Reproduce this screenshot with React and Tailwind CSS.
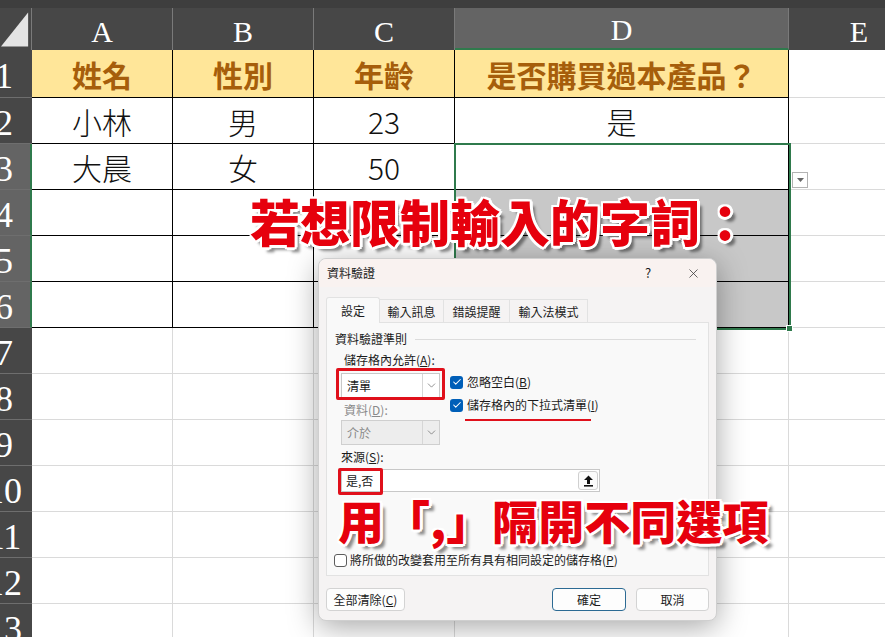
import { ChevronDown, X, Check } from 'lucide-react';

const COLS = [
  { key: 'A', w: 'w-[141px]' },
  { key: 'B', w: 'w-[141px]' },
  { key: 'C', w: 'w-[141px]' },
  { key: 'D', w: 'w-[334px]' },
  { key: 'E', w: 'w-[141px]' },
];

const DATA = {
  1: ['姓名', '性別', '年齡', '是否購買過本產品？', ''],
  2: ['小林', '男', '23', '是', ''],
  3: ['大晨', '女', '50', '', ''],
};

const ROWS = Array.from({ length: 13 }, (_, i) => i + 1);

const CJK = "font-['Noto_Sans_CJK_TC','Noto_Sans',sans-serif]";
const SERIF = "font-['Liberation_Serif',serif]";

const outline =
  '[text-shadow:2px_0_#fff,-2px_0_#fff,0_2px_#fff,0_-2px_#fff,2px_2px_#fff,-2px_-2px_#fff,2px_-2px_#fff,-2px_2px_#fff,3px_0_#fff,0_3px_#fff,5px_5px_3px_rgba(0,0,0,0.45)]';

function Corner() {
  return (
    <div className="w-[32px] h-full shrink-0 border-r border-[#7a7a7a] flex items-end">
      <svg width="32" height="42" viewBox="0 0 32 42">
        <polygon points="1,39 29,39 29,4" fill="#e4e4e4" />
      </svg>
    </div>
  );
}

function RowHeader({ r }) {
  const sel = r >= 3 && r <= 6;
  return (
    <div
      className={`w-[32px] shrink-0 h-full overflow-hidden flex items-center pt-[5px] border-b border-[#6e6e6e] ${
        sel ? 'bg-[#646464] border-r-2 border-r-[#2f7a4c]' : 'bg-[#474747]'
      }`}
    >
      <div className={`w-[8px] flex justify-center whitespace-nowrap text-white text-[36px] leading-none ${SERIF}`}>
        {r}
      </div>
    </div>
  );
}

function Cell({ r, ci, col }) {
  const inTable = r <= 6 && ci < 4;
  const text = DATA[r]?.[ci] ?? '';
  let bg = 'bg-white';
  if (r === 1 && ci < 4) bg = 'bg-[#ffe699]';
  if (ci === 3 && r >= 4 && r <= 6) bg = 'bg-[#c8c8c8]';
  const textCls = r === 1 ? 'font-bold text-[#a65e0b]' : 'font-light text-[#111]';
  return (
    <div
      className={`${col.w} shrink-0 h-full border-r border-b flex items-center justify-center ${
        inTable ? 'border-black' : 'border-[#dadada]'
      } ${bg}`}
    >
      {text && <span className={`text-[30px] leading-none ${textCls}`}>{text}</span>}
    </div>
  );
}

function Checkbox({ checked }) {
  return checked ? (
    <span className="w-[13px] h-[13px] rounded-[3px] bg-[#005fb8] flex items-center justify-center shrink-0">
      <Check size={10} strokeWidth={2.5} color="white" />
    </span>
  ) : (
    <span className="w-[13px] h-[13px] rounded-[3px] border border-[#5c5c5c] bg-white shrink-0" />
  );
}

function Select({ value, disabled }) {
  return (
    <div
      className={`w-[99px] h-[25px] flex border ${
        disabled ? 'bg-[#ededed] border-[#cfcfcf] text-[#8a8a8a]' : 'bg-white border-[#c8c8c8] text-[#1b1b1b]'
      }`}
    >
      <div className="flex-1 flex items-center pl-[5px]">{value}</div>
      <div className="w-[17px] border-l border-[#d6d6d6] flex items-center justify-center">
        <ChevronDown size={13} strokeWidth={1.3} color="#666" />
      </div>
    </div>
  );
}

function Dialog() {
  return (
    <div className="absolute left-[318px] top-[258px] w-[399px] h-[363px] rounded-[8px] bg-[#f5f3f3] border border-[#cfcfcf] shadow-[0_6px_30px_rgba(0,0,0,0.35)] text-[12px] text-[#1b1b1b] flex flex-col">
      <div className="h-[28px] shrink-0 flex items-center pl-[8px] pr-[13px] rounded-t-[8px] bg-[#f9f2f0]">
        <span>資料驗證</span>
        <span className="ml-auto w-[20px] text-center text-[13px]">?</span>
        <span className="ml-[25px] w-[20px] flex justify-center">
          <X size={15} strokeWidth={1.2} color="#333" />
        </span>
      </div>

      <div className="mt-[10px] px-[7px] h-[26px] flex items-end shrink-0 relative z-10">
        <div className="w-[54px] h-[26px] bg-[#f9f9f9] border border-b-0 border-[#e2e2e2] rounded-t-[3px] flex items-center justify-center">
          設定
        </div>
        <div className="w-[64px] h-[24px] border-t border-r border-[#e2e2e2] flex items-center justify-center">輸入訊息</div>
        <div className="w-[66px] h-[24px] border-t border-r border-[#e2e2e2] flex items-center justify-center">錯誤提醒</div>
        <div className="w-[78px] h-[24px] border-t border-r border-[#e2e2e2] flex items-center justify-center">輸入法模式</div>
      </div>

      <div className="mx-[7px] -mt-px h-[254px] shrink-0 bg-[#f9f9f9] border border-[#e2e2e2] pt-[8px] px-[8px] flex flex-col">
        <div className="h-[16px] flex items-center">
          <span>資料驗證準則</span>
          <span className="flex-1 h-px bg-[#dcdcdc] ml-[8px] mr-[4px]" />
        </div>
        <div className="h-[16px] mt-[5px] pl-[9px] flex items-center">
          儲存格內允許(<span className="underline">A</span>):
        </div>

        <div className="mt-[5px] flex">
          <div className="ml-[6px] w-[99px] flex flex-col">
            <div className="relative">
              <Select value="清單" />
              <div className="absolute -left-[5px] -top-[5px] w-[109px] h-[32px] border-[3px] border-[#e0101b] rounded-[2px]" />
            </div>
            <div className="h-[16px] mt-[4px] pl-[3px] flex items-center text-[#8a8a8a]">
              資料(<span className="underline">D</span>):
            </div>
            <div className="mt-[2px]">
              <Select value="介於" disabled />
            </div>
          </div>
          <div className="ml-[10px] flex flex-col">
            <div className="mt-[1px] h-[16px] flex items-center gap-[4px]">
              <Checkbox checked />
              <span>
                忽略空白(<span className="underline">B</span>)
              </span>
            </div>
            <div className="mt-[7px] h-[16px] flex items-center gap-[4px] relative">
              <Checkbox checked />
              <span>
                儲存格內的下拉式清單(<span className="underline">I</span>)
              </span>
              <div className="absolute left-[15px] top-[22px] w-[126px] h-[2px] bg-[#e0101b]" />
            </div>
          </div>
        </div>

        <div className="h-[16px] mt-[4px] ml-[6px] flex items-center">
          來源(<span className="underline">S</span>):
        </div>
        <div className="relative mt-[4px] ml-[6px] w-[259px] h-[23px] bg-white border border-[#c8c8c8] flex items-center">
          <span className="pl-[4px]">是,否</span>
          <div className="ml-auto mr-px w-[20px] h-[19px] border border-[#d0d0d0] rounded-[3px] bg-[#fbfbfb] flex items-center justify-center">
            <svg width="11" height="12" viewBox="0 0 11 12">
              <path d="M5.5 0.5 L10 5 L7 5 L7 9 L4 9 L4 5 L1 5 Z" fill="#111" />
              <rect x="1" y="10" width="9" height="1.6" fill="#111" />
            </svg>
          </div>
          <div className="absolute -left-[4px] -top-[2px] w-[45px] h-[27px] border-[3px] border-[#e0101b] rounded-[2px]" />
        </div>

        <div className="mt-[60px] -ml-px h-[16px] flex items-center gap-[3px]">
          <Checkbox />
          <span>
            將所做的改變套用至所有具有相同設定的儲存格(<span className="underline">P</span>)
          </span>
        </div>
      </div>

      <div className="mt-[12px] px-[7px] h-[23px] flex shrink-0">
        <div className="w-[79px] h-[23px] bg-[#fdfdfd] border border-[#d3d3d3] rounded-[4px] flex items-center justify-center">
          全部清除(<span className="underline">C</span>)
        </div>
        <div className="ml-auto w-[74px] h-[23px] bg-[#fdfdfd] border border-[#2c6a93] rounded-[4px] flex items-center justify-center">
          確定
        </div>
        <div className="ml-[10px] w-[73px] h-[23px] bg-[#fdfdfd] border border-[#d3d3d3] rounded-[4px] flex items-center justify-center">
          取消
        </div>
      </div>
    </div>
  );
}

export default function App() {
  return (
    <div className={`relative w-[885px] h-[637px] overflow-hidden bg-white ${CJK}`}>
      <div className="h-[8px] bg-[#3e3e3e]" />

      <div className="h-[42px] flex bg-[#474747]">
        <Corner />
        {COLS.map((c) => (
          <div
            key={c.key}
            className={`${c.w} shrink-0 h-full border-r border-[#7a7a7a] flex items-end justify-center pb-[3px] text-white text-[30px] leading-none ${SERIF} ${
              c.key === 'D' ? 'bg-[#646464] border-b-2 border-b-[#2f7a4c]' : ''
            }`}
          >
            {c.key}
          </div>
        ))}
      </div>

      {ROWS.map((r) => (
        <div key={r} className={`flex ${r === 1 ? 'h-[48px]' : 'h-[46px]'}`}>
          <RowHeader r={r} />
          {COLS.map((c, ci) => (
            <Cell key={c.key} r={r} ci={ci} col={c} />
          ))}
        </div>
      ))}

      {/* selection D3:D6 */}
      <div className="absolute left-[454px] top-[143px] w-[337px] h-[187px] border-2 border-[#2f7a4c]" />
      <div className="absolute left-[786px] top-[325px] w-[7px] h-[7px] bg-[#2f7a4c] border border-white" />

      {/* list dropdown button */}
      <div className="absolute left-[792px] top-[172px] w-[16px] h-[16px] bg-white border border-[#b3b3b3] flex items-center justify-center">
        <svg width="7" height="4" viewBox="0 0 7 4">
          <polygon points="0,0 7,0 3.5,4" fill="#666" />
        </svg>
      </div>

      <Dialog />

      <div className={`absolute left-[250px] top-[195px] whitespace-nowrap text-[50px] leading-none font-black text-[#e6000d] ${outline}`}>
        若想限制輸入的字詞：
      </div>
      <div className={`absolute left-[338px] top-[496px] whitespace-nowrap text-[46px] leading-none font-black text-[#e6000d] ${outline}`}>
        用「,」隔開不同選項
      </div>
    </div>
  );
}
